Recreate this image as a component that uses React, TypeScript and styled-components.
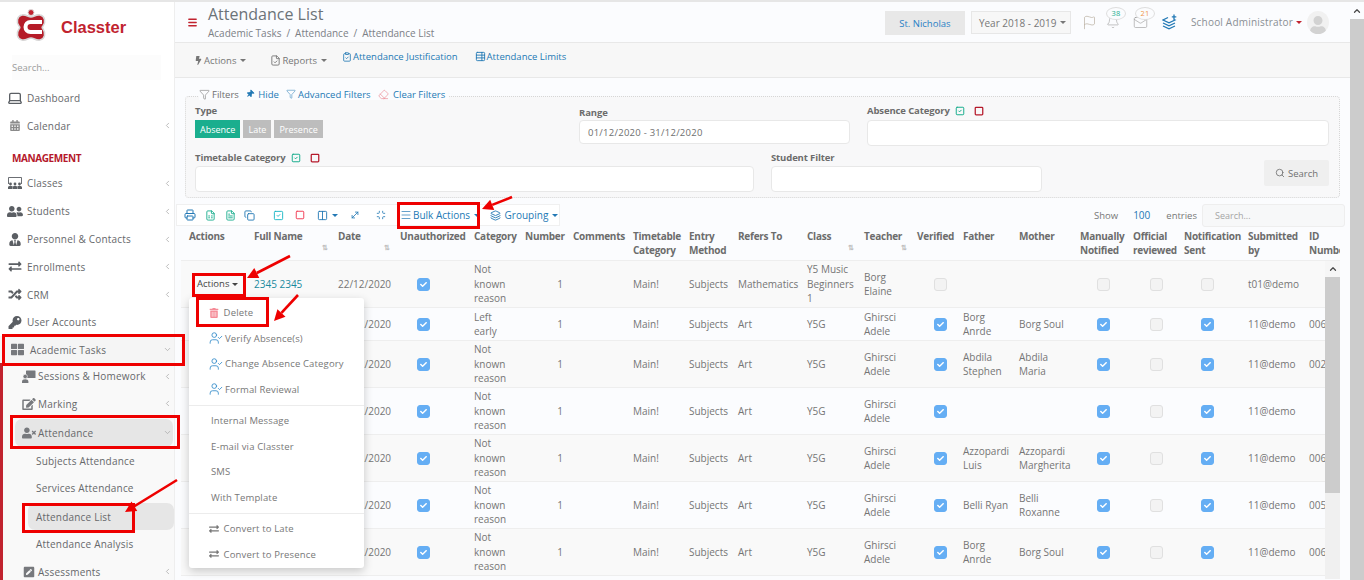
import React from 'react';
import styled, { createGlobalStyle } from 'styled-components';
import {
  Bell, ChevronDown, ChevronLeft, ChevronUp, ClipboardCheck, Columns2, Copy, Eraser, FileCheck,
  FileSpreadsheet, FileText, Flag, Funnel, Laptop, Mail, Menu, Minimize, MoveDiagonal, Printer, Search as SearchIcon,
  Square, SquareCheck, TableProperties, UserCheck, Layers,
} from 'lucide-react';
import {
  FaBolt, FaCalendarAlt, FaCheck, FaExchangeAlt, FaKey, FaPenSquare, FaRandom,
  FaThLarge, FaThumbtack, FaTrashAlt, FaUser, FaUserFriends, FaUserTie, FaUserTimes, FaEdit,
} from 'react-icons/fa';

const GlobalStyle = createGlobalStyle`
    html, body {
        margin: 0;
        padding: 0;
        height: 100%;
        overflow: hidden;
        background: #fbfcfe;
    }
    * {
        box-sizing: border-box;
    }
    body {
        font-family: "Open Sans", "Liberation Sans", sans-serif;
        font-size: 10px;
        color: #6f6f6f;
    }
`;

const Page = styled.div`
    position: relative;
    display: flex;
    width: 1364px;
    height: 580px;
    overflow: hidden;
    border-top: 2px solid #e6e6e6;
`;

/* ---------- sidebar ---------- */
const Sidebar = styled.aside`
    flex: 0 0 175px;
    display: flex;
    flex-direction: column;
    background: #ffffff;
    border-right: 1px solid #eeeeee;
    & > * {
        flex-shrink: 0;
    }
`;

const Brand = styled.div`
    display: flex;
    align-items: center;
    height: 44px;
    padding: 6px 0 0 15px;
    gap: 14px;
`;

const BrandName = styled.span`
    font-family: "Liberation Sans", sans-serif;
    font-weight: 700;
    font-size: 16.5px;
    color: #c1232f;
`;

const SideSearch = styled.input`
    margin: 9px 13px 4px 12px;
    height: 25px;
    padding: 0;
    border: none;
    outline: none;
    background: #fcfcfc;
    font-family: inherit;
    font-size: 9.5px;
    &::placeholder {
        color: #9b9b9b;
    }
`;

const NavItem = styled.div`
    display: flex;
    align-items: center;
    height: 27.8px;
    padding: 0 0 0 7px;
    font-size: 10px;
    letter-spacing: 0.2px;
    color: #66686b;
    svg.ico {
        flex: 0 0 16px;
        margin-right: 4px;
        color: #5b5f64;
    }
`;

const NavLabel = styled.span`
    flex: 1;
    white-space: nowrap;
`;

const Caret = styled(ChevronLeft)`
    color: #a8a8a8;
    margin-right: 2px;
`;

const Section = styled.div`
    display: flex;
    align-items: flex-end;
    height: 30px;
    padding: 0 0 5px 12px;
    font-size: 10px;
    font-weight: 700;
    letter-spacing: -0.4px;
    color: #b5192b;
`;

const ActiveGroup = styled.div`
    display: flex;
    align-items: center;
    height: 27px;
    padding: 0 2px 0 11px;
    background: #f5f5f5;
    font-size: 10px;
    letter-spacing: 0.2px;
    color: #66686b;
    svg.ico {
        flex: 0 0 13px;
        margin-right: 6px;
        color: #77797d;
    }
`;

const SubNav = styled.div`
    flex: 1;
    background: #f9f9f9;
    border-left: 3px solid #c1232f;
`;

const SubItem = styled.div<{ $active?: boolean }>`
    display: flex;
    align-items: center;
    height: 27.5px;
    margin-left: 25px;
    margin-top: ${p => (p.$active ? '1px' : '0')};
    padding: 0 0 0 8px;
    border-radius: 7px;
    background: ${p => (p.$active ? '#e6e6e6' : 'transparent')};
    font-size: 10px;
    letter-spacing: 0.2px;
    color: #66686b;
`;

const OpenItem = styled(NavItem)`
    height: 28px;
    margin: 1px 1px 0 12px;
    padding: 0 1px 0 7px;
    border-radius: 7px;
    background: #e6e6e6;
    svg.ico {
        flex: 0 0 14px;
        margin-right: 2px;
        color: #77797d;
    }
`;

const SideSub = styled(NavItem)`
    height: 27.7px;
    padding-left: 19px;
    &:first-child {
        margin-top: -1px;
    }
    svg.ico {
        flex: 0 0 14px;
        margin-right: 2px;
        color: #77797d;
    }
`;

/* ---------- main ---------- */
const Main = styled.main`
    flex: 0 0 1175px;
    display: flex;
    flex-direction: column;
    min-width: 0;
`;

const Header = styled.header`
    display: flex;
    align-items: center;
    height: 41px;
    padding: 0 21px 0 12px;
    background: #fbfcfe;
    border-bottom: 1px solid #e8e8e8;
`;

const TitleBlock = styled.div`
    margin-left: 10px;
    margin-top: -1px;
`;

const Title = styled.h1`
    margin: 0;
    font-size: 16px;
    font-weight: 400;
    line-height: 20px;
    color: #6c7378;
`;

const Crumbs = styled.div`
    display: flex;
    gap: 5px;
    margin-top: 3px;
    font-size: 10px;
    line-height: 12px;
    color: #7b8086;
`;

const HeaderRight = styled.div`
    display: flex;
    align-items: center;
    margin-left: auto;
`;

const School = styled.div`
    display: flex;
    align-items: center;
    justify-content: center;
    width: 80px;
    height: 24px;
    margin-top: 2px;
    background: #e8e8e8;
    color: #2a80c5;
    font-size: 9.5px;
`;

const Year = styled.div`
    display: flex;
    align-items: center;
    justify-content: space-between;
    width: 100px;
    height: 23px;
    margin-left: 6px;
    margin-top: 1px;
    padding: 0 6px 0 7px;
    background: #f7f7f7;
    border: 1px solid #e7e7e7;
    font-size: 10px;
    white-space: nowrap;
    color: #777777;
`;

const TriDown = styled.span<{ $color?: string }>`
    display: inline-block;
    flex: none;
    width: 0;
    height: 0;
    margin-left: 3px;
    border-left: 3px solid transparent;
    border-right: 3px solid transparent;
    border-top: 3px solid ${p => p.$color || 'currentColor'};
    vertical-align: middle;
`;

const TopIcon = styled.div<{ $gap: number }>`
    position: relative;
    display: flex;
    margin-left: ${p => p.$gap}px;
`;

const Bubble = styled.span<{ $color: string; $left: number }>`
    position: absolute;
    top: -8px;
    left: ${p => p.$left}px;
    width: 20px;
    height: 13px;
    border-radius: 50%;
    background: #fbfcfe;
    border: 1px solid #dedede;
    text-align: center;
    font-size: 7.5px;
    line-height: 11px;
    color: ${p => p.$color};
`;

const UserName = styled.span`
    margin-left: 13px;
    font-size: 10px;
    letter-spacing: 0.2px;
    color: #8a8f94;
    white-space: nowrap;
`;

const Avatar = styled.div`
    display: flex;
    align-items: flex-end;
    justify-content: center;
    width: 22px;
    height: 23px;
    margin-left: 5px;
    border-radius: 50%;
    overflow: hidden;
    background: #f1f1f1;
    color: #d2d2d2;
`;

const ActionBar = styled.div`
    display: flex;
    align-items: center;
    height: 35px;
    padding: 0 0 0 19px;
    background: #f7f7f7;
    border-bottom: 1px solid #e8e8e8;
    font-size: 9.5px;
    color: #767676;
`;

const BarButton = styled.span<{ $gap?: number }>`
    display: inline-flex;
    align-items: center;
    gap: 1px;
    margin-right: ${p => p.$gap ?? 0}px;
    white-space: nowrap;
`;

const BarLink = styled(BarButton)`
    color: #2379b5;
    align-self: flex-start;
    margin-top: 7px;
`;

const FilterArea = styled.div`
    padding: 10px 10px 0 10px;
`;

const FilterLegend = styled.div`
    position: relative;
    z-index: 1;
    display: flex;
    align-items: center;
    gap: 7px;
    height: 12px;
    margin-left: 14px;
    width: max-content;
    padding-right: 4px;
    background: #fbfcfe;
    font-size: 9.5px;
`;

const LegendItem = styled.span<{ $link?: boolean }>`
    display: inline-flex;
    align-items: center;
    gap: 2px;
    color: ${p => (p.$link ? '#2379b5' : '#6f6f6f')};
`;

const PinIcon = styled(FaThumbtack)`
    transform: rotate(45deg);
`;

const FilterBox = styled.div`
    height: 102px;
    margin-top: -4px;
    padding: 8px 10px 0 9px;
    background: #f8f8f9;
    border: 1px dotted #d6d6d6;
    border-radius: 4px;
`;

const FilterTop = styled.div`
    display: grid;
    grid-template-columns: 384px 288px 1fr;
    height: 47px;
`;

const FilterBottom = styled.div`
    display: flex;
    align-items: flex-start;
    height: 40px;
`;

const Label = styled.div<{ $down?: number }>`
    display: flex;
    align-items: center;
    gap: 5px;
    height: 11px;
    margin-top: ${p => p.$down ?? 0}px;
    font-size: 9.5px;
    font-weight: 700;
    letter-spacing: -0.12px;
    color: #6c6c6c;
`;

const RedSquare = styled(Square)`
    margin-left: 4px;
`;

const Pills = styled.div`
    display: flex;
    gap: 3px;
    margin-top: 4px;
`;

const Pill = styled.span<{ $on?: boolean }>`
    display: inline-flex;
    align-items: center;
    height: 18px;
    padding: 0 5px;
    font-size: 9px;
    color: #ffffff;
    background: ${p => (p.$on ? '#1aae8e' : '#bdbdbd')};
`;

const Field = styled.div<{ $w?: number; $h?: number; $down?: number }>`
    width: ${p => (p.$w ? p.$w + 'px' : '100%')};
    height: ${p => p.$h ?? 26}px;
    margin-top: ${p => p.$down ?? 3}px;
    padding-left: 8px;
    display: flex;
    align-items: center;
    background: #ffffff;
    border: 1px solid #e8e8e8;
    border-radius: 4px;
    font-size: 9.5px;
    letter-spacing: 0.25px;
    color: #6f6f6f;
`;

const FieldCol = styled.div<{ $w?: number }>`
    flex: 0 0 ${p => (p.$w ? p.$w + 'px' : 'auto')};
`;

const SearchBtn = styled.div`
    display: flex;
    align-items: center;
    justify-content: center;
    gap: 3px;
    width: 65px;
    height: 26px;
    margin-left: auto;
    margin-top: 8px;
    background: #efefef;
    border-radius: 2px;
    font-size: 9.5px;
    color: #707070;
`;

const TableBar = styled.div`
    display: flex;
    align-items: center;
    height: 24px;
    margin: 5px -5px 0 -9px;
`;

const ToolGroup = styled.div`
    display: flex;
    align-items: center;
    height: 22px;
    width: 384px;
    padding-left: 7px;
    background: #ffffff;
    border: 1px solid #f0f0f0;
    font-size: 10px;
    color: #2379b5;
`;

const Tool = styled.span<{ $w: number; $color?: string }>`
    display: inline-flex;
    align-items: center;
    gap: 1px;
    flex: 0 0 ${p => p.$w}px;
    white-space: nowrap;
    color: ${p => p.$color || '#2379b5'};
`;

const ShowEntries = styled.div`
    display: flex;
    align-items: center;
    margin-left: auto;
    font-size: 9.5px;
    color: #777777;
`;

const EntriesValue = styled.span`
    margin: 0 16px 0 15px;
    font-size: 10px;
    color: #2379b5;
`;

const TableSearch = styled.div`
    display: flex;
    align-items: center;
    width: 143px;
    height: 23px;
    margin-left: 5px;
    padding-left: 12px;
    background: #f7f8f9;
    border: 1px solid #eeeeee;
    border-radius: 3px;
    font-size: 9px;
    color: #a5a5a5;
`;

const cols = '65px 84px 62px 74px 51px 48px 60px 56px 49px 69px 57px 53px 46px 56px 61px 53px 51px 64px 61px 70px';

const TableWrap = styled.div`
    position: relative;
    width: 1159px;
    margin-left: -4px;
`;

const HeadClip = styled.div`
    overflow: hidden;
`;

const HeadRow = styled.div`
    display: grid;
    grid-template-columns: ${cols};
    width: 1230px;
    height: 34px;
    border-bottom: 1px solid #eeeeee;
`;

const HeadCell = styled.div`
    display: flex;
    flex-direction: column;
    padding: 2px 0 0 8px;
    font-size: 10px;
    font-weight: 700;
    line-height: 14px;
    letter-spacing: -0.25px;
    color: #6c6c6c;
    white-space: nowrap;
`;

const HeadText = styled.span`
    white-space: pre-line;
`;

const SortMark = styled.span`
    align-self: flex-end;
    margin-right: 2px;
    font-size: 7px;
    line-height: 8px;
    margin-top: 1px;
    color: #bdbdbd;
`;

const BodyFlex = styled.div`
    display: flex;
`;

const BodyClip = styled.div`
    flex: 0 0 1144px;
    overflow: hidden;
`;

const Row = styled.div<{ $odd: boolean }>`
    display: grid;
    grid-template-columns: ${cols};
    align-items: center;
    width: 1230px;
    min-height: 33px;
    background: ${p => (p.$odd ? '#f9f9f9' : '#fbfcfe')};
    border-bottom: 1px solid #eeeeee;
`;

const Cell = styled.div<{ $right?: boolean; $link?: boolean }>`
    padding: 1.25px 2px 1.25px 8px;
    font-size: 10px;
    line-height: 14.5px;
    color: ${p => (p.$link ? '#1a8a9e' : '#757575')};
    text-align: ${p => (p.$right ? 'right' : 'left')};
    white-space: pre;
`;

const Check = styled.span<{ $on?: boolean }>`
    display: inline-flex;
    align-items: center;
    justify-content: center;
    width: 13px;
    height: 13px;
    margin-left: 17px;
    vertical-align: middle;
    border-radius: 3px;
    color: #ffffff;
    background: ${p => (p.$on ? '#65aef4' : '#f3f3f3')};
    border: 1px solid ${p => (p.$on ? '#65aef4' : '#e0e0e0')};
`;

const ScrollTrack = styled.div`
    flex: 0 0 15px;
    display: flex;
    flex-direction: column;
    height: 318px;
    background: #f0f0f0;
`;

const ScrollBtn = styled.div`
    display: flex;
    align-items: center;
    justify-content: center;
    height: 16px;
    background: #f6f6f6;
    color: #4a4a4a;
`;

const ScrollThumb = styled.div`
    height: 216px;
    background: #cccccc;
`;

const RowAction = styled.span`
    margin-left: 8px;
    color: #444444;
    font-size: 9.5px;
`;

const PageBar = styled.div`
    flex: 0 0 14px;
    display: flex;
    flex-direction: column;
    background: #cccccc;
`;

const PageBarBtn = styled.div`
    display: flex;
    align-items: center;
    justify-content: center;
    height: 17px;
    background: #fbfcfe;
    color: #4a4a4a;
`;

/* ---------- row menu ---------- */
const RowMenu = styled.div`
    position: absolute;
    left: 189px;
    top: 296px;
    z-index: 3;
    width: 175px;
    height: 270px;
    padding-top: 2px;
    background: #ffffff;
    border-radius: 3px;
    box-shadow: 0 3px 10px rgba(0, 0, 0, 0.2);
`;

const MenuItem = styled.div<{ $plain?: boolean }>`
    display: flex;
    align-items: center;
    gap: 2px;
    height: 25.5px;
    padding-left: ${p => (p.$plain ? '22px' : '20px')};
    font-size: 9.5px;
    letter-spacing: 0.15px;
    color: #777777;
    white-space: nowrap;
`;

const MenuDivider = styled.div`
    height: 1px;
    margin: 2.5px 0;
    background: #ececec;
`;

/* red boxes and arrows drawn on top of the screenshot */
const Mark = styled.div<{ $x: number; $y: number; $w: number; $h: number }>`
    position: absolute;
    z-index: 5;
    left: ${p => p.$x}px;
    top: ${p => p.$y}px;
    width: ${p => p.$w}px;
    height: ${p => p.$h}px;
    border: 3px solid #ee0000;
`;

const ArrowLayer = styled.svg`
    position: absolute;
    z-index: 6;
    left: 0;
    top: -2px;
    pointer-events: none;
`;

const Arrow = ({ x1, y1, x2, y2 }: { x1: number; y1: number; x2: number; y2: number }) => {
  const a = Math.atan2(y2 - y1, x2 - x1);
  const bx = x2 - Math.cos(a) * 11;
  const by = y2 - Math.sin(a) * 11;
  const nx = -Math.sin(a) * 5.5;
  const ny = Math.cos(a) * 5.5;
  return (
    <g>
      <path d={`M${x1} ${y1}L${bx} ${by}`} stroke="#ee0000" strokeWidth="2.6" fill="none" />
      <path d={`M${x2} ${y2}L${bx + nx} ${by + ny}L${bx - nx} ${by - ny}Z`} fill="#ee0000" />
    </g>
  );
};

const Logo = () => (
  <svg width="32" height="38" viewBox="0 0 32 38">
    <path
      d="M16 9c3 0 5-3 9-2 5 1 6 7 3 11-1 1-1 2 0 3 3 4 2 10-3 11-4 1-6-2-9-2s-5 3-9 2c-5-1-6-7-3-11 1-1 1-2 0-3C1 14 2 8 7 7c4-1 6 2 9 2z"
      fill="#b51c28"
      stroke="#d8d8d8"
      strokeWidth="1.6"
    />
    <circle cx="16" cy="4.5" r="3" fill="#c1232f" stroke="#dddddd" />
    <path d="M27 14H15.5c-3 0-5 2-5 5s2 5 5 5H27" fill="none" stroke="#ffffff" strokeWidth="4" />
  </svg>
);

/* board above three small people */
const ClassesIcon = () => (
  <svg className="ico" width="16" height="14" viewBox="0 0 16 14" fill="currentColor">
    <path d="M1.5 8V1.5h13V8" fill="none" stroke="currentColor" strokeWidth="0.9" />
    <circle cx="3.5" cy="8" r="1.4" />
    <circle cx="8" cy="8" r="1.4" />
    <circle cx="12.5" cy="8" r="1.4" />
    <path d="M1 13v-1.500c0-1 1-1.700 2.500-1.700S6 10.500 6 11.500V13zM5.600 13h4.800v-1.500c0-1-1-1.700-2.400-1.700s-2.400.7-2.400 1.700zM10 13v-1.500c0-1 1-1.700 2.500-1.700s2.500.7 2.500 1.700V13z" />
  </svg>
);

/* person in front of a small board */
const SessionsIcon = () => (
  <svg className="ico" width="14" height="13" viewBox="0 0 14 13" fill="currentColor">
    <rect x="4" y="0.500" width="9.500" height="7.500" rx="0.500" />
    <circle cx="3.200" cy="6.500" r="2.200" stroke="#f9f9f9" strokeWidth="0.600" />
    <path d="M0 13v-1.500C0 10 1.400 9.200 3.200 9.200s3.200.8 3.200 2.300V13z" />
  </svg>
);

/* stacked layers with a plus */
const LayersPlus = () => (
  <svg width="16" height="16" viewBox="0 0 16 16" fill="none" stroke="#2379b5" strokeWidth="1.300">
    <path d="M6 3.500L1 6l6 2.800L13 6l-1.500-.8" />
    <path d="M1 9l6 2.800L13 9" />
    <path d="M1 12l6 2.800L13 12" />
    <path d="M12 .5v4.500M9.800 2.800h4.500" />
  </svg>
);

type RowData = {
  name?: string;
  cat: string;
  mid?: string;
  cls?: string;
  refers?: string;
  teacher?: string;
  verified?: boolean;
  father?: string;
  mother?: string;
  manual?: boolean;
  sent?: boolean;
  by?: string;
  id?: string;
};

const base = { mid: 'Main!', refers: 'Art', cls: 'Y5G', teacher: 'Ghirsci\nAdele', verified: true, manual: true, sent: true, by: '11@demo' };
const notKnown = 'Not\nknown\nreason';

const rows: RowData[] = [
  { name: '2345 2345', cat: notKnown, mid: 'Main!', refers: 'Mathematics', cls: 'Y5 Music\nBeginners\n1', teacher: 'Borg\nElaine', by: 't01@demo' },
  { ...base, cat: 'Left\nearly', father: 'Borg\nAnrde', mother: 'Borg Soul', id: '006' },
  { ...base, cat: notKnown, father: 'Abdila\nStephen', mother: 'Abdila\nMaria', id: '002' },
  { ...base, cat: notKnown },
  { ...base, cat: notKnown, father: 'Azzopardi\nLuis', mother: 'Azzopardi\nMargherita', id: '006' },
  { ...base, cat: notKnown, father: 'Belli Ryan', mother: 'Belli\nRoxanne', id: '005' },
  { ...base, cat: notKnown, father: 'Borg\nAnrde', mother: 'Borg Soul', id: '006' },
];

const heads: { t: string; sort?: boolean }[] = [
  { t: 'Actions' }, { t: 'Full Name', sort: true }, { t: 'Date', sort: true }, { t: 'Unauthorized' }, { t: 'Category' },
  { t: 'Number' }, { t: 'Comments' }, { t: 'Timetable\nCategory' }, { t: 'Entry\nMethod' }, { t: 'Refers To' },
  { t: 'Class', sort: true }, { t: 'Teacher', sort: true }, { t: 'Verified' }, { t: 'Father' }, { t: 'Mother' },
  { t: 'Manually\nNotified' }, { t: 'Official\nreviewed' }, { t: 'Notification\nSent' }, { t: 'Submitted\nby' }, { t: 'ID\nNumber' },
];

const CheckBox = ({ on }: { on?: boolean }) => (
  <Check $on={on}>{on && <FaCheck size={7} />}</Check>
);

const App = () => (
  <Page>
    <GlobalStyle />
    <Sidebar>
      <Brand>
        <Logo />
        <BrandName>Classter</BrandName>
      </Brand>
      <SideSearch placeholder="Search..." />
      <NavItem><Laptop className="ico" size={16} /><NavLabel>Dashboard</NavLabel></NavItem>
      <NavItem><FaCalendarAlt className="ico" size={11} color="#8a8a8a" /><NavLabel>Calendar</NavLabel><Caret size={9} /></NavItem>
      <Section>MANAGEMENT</Section>
      <NavItem><ClassesIcon /><NavLabel>Classes</NavLabel><Caret size={9} /></NavItem>
      <NavItem><FaUserFriends className="ico" size={15} /><NavLabel>Students</NavLabel><Caret size={9} /></NavItem>
      <NavItem><FaUserTie className="ico" size={13} /><NavLabel>Personnel &amp; Contacts</NavLabel><Caret size={9} /></NavItem>
      <NavItem><FaExchangeAlt className="ico" size={13} /><NavLabel>Enrollments</NavLabel><Caret size={9} /></NavItem>
      <NavItem><FaRandom className="ico" size={13} /><NavLabel>CRM</NavLabel><Caret size={9} /></NavItem>
      <NavItem><FaKey className="ico" size={13} /><NavLabel>User Accounts</NavLabel></NavItem>
      <ActiveGroup><FaThLarge className="ico" size={13} /><NavLabel>Academic Tasks</NavLabel><ChevronDown size={9} color="#a8a8a8" /></ActiveGroup>
      <SubNav>
        <SideSub><SessionsIcon /><NavLabel>Sessions &amp; Homework</NavLabel><Caret size={9} /></SideSub>
        <SideSub><FaEdit className="ico" size={12} /><NavLabel>Marking</NavLabel><Caret size={9} /></SideSub>
        <OpenItem><FaUserTimes className="ico" size={14} /><NavLabel>Attendance</NavLabel><ChevronDown size={9} color="#a8a8a8" /></OpenItem>
        <SubItem>Subjects Attendance</SubItem>
        <SubItem>Services Attendance</SubItem>
        <SubItem $active>Attendance List</SubItem>
        <SubItem>Attendance Analysis</SubItem>
        <SideSub><FaPenSquare className="ico" size={12} /><NavLabel>Assessments</NavLabel><Caret size={9} /></SideSub>
      </SubNav>
    </Sidebar>

    <Main>
      <Header>
        <Menu size={11} strokeWidth={3} color="#c1232f" />
        <TitleBlock>
          <Title>Attendance List</Title>
          <Crumbs><span>Academic Tasks</span><span>/</span><span>Attendance</span><span>/</span><span>Attendance List</span></Crumbs>
        </TitleBlock>
        <HeaderRight>
          <School>St. Nicholas</School>
          <Year>Year 2018 - 2019<TriDown /></Year>
          <TopIcon $gap={11}><Flag size={15} strokeWidth={1} color="#b0a595" /></TopIcon>
          <TopIcon $gap={9}><Bell size={14} strokeWidth={1} color="#9a9a9a" /><Bubble $color="#1aae8e" $left={0}>38</Bubble></TopIcon>
          <TopIcon $gap={13}><Mail size={15} strokeWidth={1} color="#9a9a9a" /><Bubble $color="#f0974a" $left={2}>21</Bubble></TopIcon>
          <TopIcon $gap={14}><LayersPlus /></TopIcon>
          <UserName>School Administrator</UserName>
          <TriDown $color="#c1232f" />
          <Avatar><FaUser size={18} /></Avatar>
        </HeaderRight>
      </Header>

      <ActionBar>
        <BarButton $gap={24}><FaBolt size={9} />Actions<TriDown /></BarButton>
        <BarButton $gap={15}><FileCheck size={11} />Reports<TriDown /></BarButton>
        <BarLink $gap={17}><ClipboardCheck size={10} />Attendance Justification</BarLink>
        <BarLink><TableProperties size={11} />Attendance Limits</BarLink>
      </ActionBar>

      <FilterArea>
        <FilterLegend>
          <LegendItem><Funnel size={11} strokeWidth={1.2} />Filters</LegendItem>
          <LegendItem $link><PinIcon size={8} />&nbsp;Hide</LegendItem>
          <LegendItem $link><Funnel size={10} strokeWidth={1.2} />Advanced Filters</LegendItem>
          <LegendItem $link><Eraser size={11} strokeWidth={1.2} color="#e8707a" />&nbsp;Clear Filters</LegendItem>
        </FilterLegend>
        <FilterBox>
          <FilterTop>
            <div>
              <Label>Type</Label>
              <Pills><Pill $on>Absence</Pill><Pill>Late</Pill><Pill>Presence</Pill></Pills>
            </div>
            <div>
              <Label $down={2}>Range</Label>
              <Field $w={271} $h={24} $down={2}>01/12/2020 - 31/12/2020</Field>
            </div>
            <div>
              <Label>Absence Category <SquareCheck size={10} strokeWidth={2.4} color="#1aae8e" /> <RedSquare size={10} color="#b5192b" strokeWidth={3} /></Label>
              <Field $down={4} />
            </div>
          </FilterTop>
          <FilterBottom>
            <FieldCol $w={576}>
              <Label>Timetable Category <SquareCheck size={10} strokeWidth={2.4} color="#1aae8e" /> <RedSquare size={10} color="#b5192b" strokeWidth={3} /></Label>
              <Field $w={559} />
            </FieldCol>
            <FieldCol $w={271}>
              <Label>Student Filter</Label>
              <Field />
            </FieldCol>
            <SearchBtn><SearchIcon size={10} />Search</SearchBtn>
          </FilterBottom>
        </FilterBox>

        <TableBar>
          <ToolGroup>
            <Tool $w={21}><Printer size={12} /></Tool>
            <Tool $w={20}><FileSpreadsheet size={11} color="#1aae8e" /></Tool>
            <Tool $w={19}><FileText size={11} color="#1aae8e" /></Tool>
            <Tool $w={29}><Copy size={11} /></Tool>
            <Tool $w={22}><SquareCheck size={11} color="#17b6c4" /></Tool>
            <Tool $w={22}><Square size={10} color="#f2455c" strokeWidth={2.4} /></Tool>
            <Tool $w={33}><Columns2 size={11} /><TriDown /></Tool>
            <Tool $w={26}><MoveDiagonal size={10} /></Tool>
            <Tool $w={24}><Minimize size={10} /></Tool>
            <Tool $w={90}><Menu size={12} strokeWidth={1.4} />Bulk Actions<TriDown /></Tool>
            <Tool $w={70}><Layers size={11} />&nbsp;Grouping<TriDown /></Tool>
          </ToolGroup>
          <ShowEntries>
            Show<EntriesValue>100</EntriesValue>entries
            <TableSearch>Search...</TableSearch>
          </ShowEntries>
        </TableBar>

        <TableWrap>
          <HeadClip>
            <HeadRow>
              {heads.map(h => (
                <HeadCell key={h.t}>
                  <HeadText>{h.t}</HeadText>
                  {h.sort && <SortMark>⇅</SortMark>}
                </HeadCell>
              ))}
            </HeadRow>
          </HeadClip>
          <BodyFlex>
            <BodyClip>
              {rows.map((r, i) => (
                <Row key={i} $odd={i % 2 === 0}>
                  <Cell>{i === 0 && <RowAction>Actions<TriDown /></RowAction>}</Cell>
                  <Cell $link>{r.name}</Cell>
                  <Cell>22/12/2020</Cell>
                  <Cell><CheckBox on /></Cell>
                  <Cell>{r.cat}</Cell>
                  <Cell $right>1</Cell>
                  <Cell />
                  <Cell>{r.mid}</Cell>
                  <Cell>Subjects</Cell>
                  <Cell>{r.refers}</Cell>
                  <Cell>{r.cls}</Cell>
                  <Cell>{r.teacher}</Cell>
                  <Cell><CheckBox on={r.verified} /></Cell>
                  <Cell>{r.father}</Cell>
                  <Cell>{r.mother}</Cell>
                  <Cell><CheckBox on={r.manual} /></Cell>
                  <Cell><CheckBox /></Cell>
                  <Cell><CheckBox on={r.sent} /></Cell>
                  <Cell>{r.by}</Cell>
                  <Cell>{r.id}</Cell>
                </Row>
              ))}
            </BodyClip>
            <ScrollTrack>
              <ScrollBtn><ChevronUp size={10} strokeWidth={3} /></ScrollBtn>
              <ScrollThumb />
            </ScrollTrack>
          </BodyFlex>
        </TableWrap>
      </FilterArea>
    </Main>
    <PageBar>
      <PageBarBtn><ChevronUp size={10} strokeWidth={3} /></PageBarBtn>
    </PageBar>

    <RowMenu>
      <MenuItem><FaTrashAlt size={10} color="#f58b97" />&nbsp;Delete</MenuItem>
      <MenuItem><UserCheck size={14} color="#2b87c8" strokeWidth={1.4} />Verify Absence(s)</MenuItem>
      <MenuItem><UserCheck size={14} color="#2b87c8" strokeWidth={1.4} />Change Absence Category</MenuItem>
      <MenuItem><UserCheck size={14} color="#2b87c8" strokeWidth={1.4} />Formal Reviewal</MenuItem>
      <MenuDivider />
      <MenuItem $plain>Internal Message</MenuItem>
      <MenuItem $plain>E-mail via Classter</MenuItem>
      <MenuItem $plain>SMS</MenuItem>
      <MenuItem $plain>With Template</MenuItem>
      <MenuDivider />
      <MenuItem><FaExchangeAlt size={10} />&nbsp;Convert to Late</MenuItem>
      <MenuItem><FaExchangeAlt size={10} />&nbsp;Convert to Presence</MenuItem>
    </RowMenu>

    <Mark $x={2} $y={332} $w={183} $h={32} />
    <Mark $x={10} $y={413} $w={170} $h={34} />
    <Mark $x={22} $y={501} $w={113} $h={30} />
    <Mark $x={397} $y={200} $w={83} $h={27} />
    <Mark $x={192} $y={271} $w={54} $h={24} />
    <Mark $x={196} $y={295} $w={73} $h={30} />
    <ArrowLayer width="1364" height="580">
      <Arrow x1={512} y1={197} x2={482} y2={209} />
      <Arrow x1={290} y1={256} x2={247} y2={278} />
      <Arrow x1={298} y1={295} x2={274} y2={321} />
      <Arrow x1={177} y1={480} x2={125} y2={512} />
    </ArrowLayer>
  </Page>
);

export default App;
